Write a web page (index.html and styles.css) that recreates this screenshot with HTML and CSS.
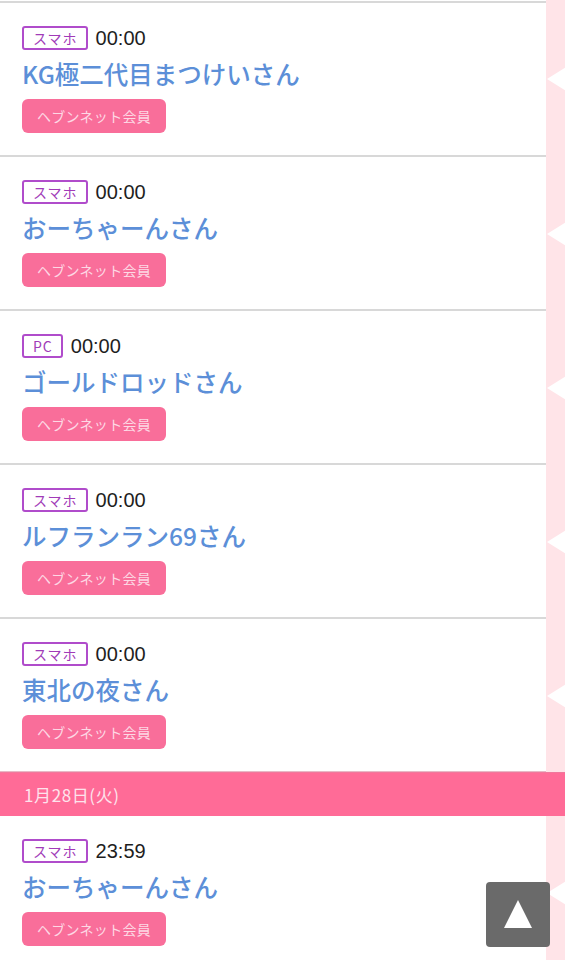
FILE: index.html
```html
<!DOCTYPE html>
<html lang="ja">
<head>
<meta charset="utf-8">
<link rel="stylesheet" href="styles.css">
</head>
<body>
<div class="page">
  <div class="top-gap"><div class="top-main"></div><div class="side"></div></div>

  <div class="row first">
    <div class="item">
      <div class="meta"><span class="badge">スマホ</span><span class="time">00:00</span></div>
      <div class="name">KG極二代目まつけいさん</div>
      <span class="member">ヘブンネット会員</span>
    </div>
    <div class="side"><span class="tri"></span></div>
  </div>

  <div class="row">
    <div class="item">
      <div class="meta"><span class="badge">スマホ</span><span class="time">00:00</span></div>
      <div class="name">おーちゃーんさん</div>
      <span class="member">ヘブンネット会員</span>
    </div>
    <div class="side"><span class="tri"></span></div>
  </div>

  <div class="row">
    <div class="item">
      <div class="meta"><span class="badge">PC</span><span class="time">00:00</span></div>
      <div class="name">ゴールドロッドさん</div>
      <span class="member">ヘブンネット会員</span>
    </div>
    <div class="side"><span class="tri"></span></div>
  </div>

  <div class="row">
    <div class="item">
      <div class="meta"><span class="badge">スマホ</span><span class="time">00:00</span></div>
      <div class="name">ルフランラン69さん</div>
      <span class="member">ヘブンネット会員</span>
    </div>
    <div class="side"><span class="tri"></span></div>
  </div>

  <div class="row last">
    <div class="item">
      <div class="meta"><span class="badge">スマホ</span><span class="time">00:00</span></div>
      <div class="name">東北の夜さん</div>
      <span class="member">ヘブンネット会員</span>
    </div>
    <div class="side"><span class="tri"></span></div>
  </div>

  <div class="date-bar">1月28日(火)</div>

  <div class="row">
    <div class="item">
      <div class="meta"><span class="badge">スマホ</span><span class="time">23:59</span></div>
      <div class="name">おーちゃーんさん</div>
      <span class="member">ヘブンネット会員</span>
    </div>
    <div class="side"><span class="tri"></span></div>
  </div>
</div>

<a class="to-top" href="#">
  <svg width="30" height="30" viewBox="0 0 30 30"><polygon points="15,1 29,29 1,29" fill="#fff"/></svg>
</a>
</body>
</html>
```

FILE: styles.css
```css
* { box-sizing: border-box; }
html, body { margin: 0; padding: 0; }
body {
  background: #fff;
  font-family: "Noto Sans CJK JP", "Noto Sans", sans-serif;
  width: 565px;
  height: 960px;
  overflow: hidden;
}
.page { display: flex; flex-direction: column; }
.top-gap { display: grid; grid-template-columns: 546px 19px; height: 1px; }
.top-main { background: #fff; }
.side {
  background: #ffe4e8;
  display: flex;
  align-items: center;
  justify-content: flex-start;
}
.tri {
  display: block;
  width: 0; height: 0;
  border-top: 12px solid transparent;
  border-bottom: 12px solid transparent;
  border-right: 19px solid #fff;
  margin-left: 1px;
}
.row { display: grid; grid-template-columns: 546px 19px; }
.item {
  height: 154px;
  padding: 23px 0 0 22px;
  border-bottom: 2px solid #d8d8d8;
  display: flex;
  flex-direction: column;
  align-items: flex-start;
}
.row.first .item { border-top: 2px solid #d8d8d8; height: 156px; }
.row.last .item { border-bottom: 1px solid #e8b8c6; height: 153px; }
.meta { display: flex; align-items: center; height: 24px; }
.badge {
  display: inline-flex;
  align-items: center;
  justify-content: center;
  height: 24px;
  padding: 0 8px 0 9px;
  border: 2px solid #b04ccb;
  border-radius: 3px;
  color: #a13bb8;
  font-size: 14px;
  letter-spacing: 1px;
  line-height: 1;
  font-family: "Noto Sans CJK JP", "Liberation Sans", sans-serif;
}
.time {
  margin-left: 8px;
  font-family: "Liberation Sans", Arial, sans-serif;
  font-size: 20px;
  color: #1e1e1e;
  line-height: 24px;
}
.name {
  margin-top: 7px;
  height: 34px;
  line-height: 34px;
  font-size: 24.5px;
  font-weight: 500;
  color: #5c8fd8;
  white-space: nowrap;
  font-family: "Noto Sans CJK JP", sans-serif;
}
.member {
  margin-top: 8px;
  display: inline-flex;
  align-items: center;
  justify-content: center;
  width: 144px;
  height: 34px;
  background: #f96e9a;
  border-radius: 6px;
  color: #fdd8e4;
  font-size: 14px;
  letter-spacing: 0.3px;
  line-height: 1;
}
.date-bar {
  height: 44px;
  background: #ff6b97;
  border-top: 1px solid #f0789c;
  color: #fde3ec;
  font-size: 17px;
  letter-spacing: 0.6px;
  line-height: 43px;
  padding-left: 24px;
  font-family: "Noto Sans CJK JP", "Liberation Sans", sans-serif;
}
.to-top {
  position: fixed;
  right: 15px;
  bottom: 13px;
  width: 64px;
  height: 65px;
  background: #6a6a6a;
  border-radius: 4px;
  display: flex;
  align-items: center;
  justify-content: center;
}
.to-top svg { display: block; margin-top: -2px; }
```
